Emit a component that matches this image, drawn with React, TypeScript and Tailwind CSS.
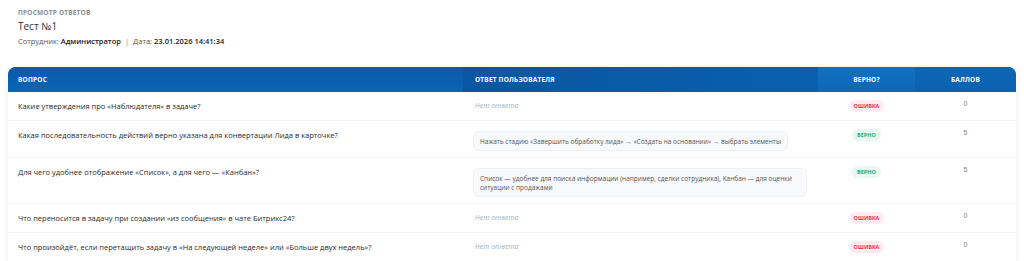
import React from "react";

type Row = {
  q: string;
  a: string | null;
  ok: boolean;
  score: number;
};

const rows: Row[] = [
  { q: "Какие утверждения про «Наблюдателя» в задаче?", a: null, ok: false, score: 0 },
  {
    q: "Какая последовательность действий верно указана для конвертации Лида в карточке?",
    a: "Нажать стадию «Завершить обработку лида» → «Создать на основании» → выбрать элементы",
    ok: true,
    score: 5,
  },
  {
    q: "Для чего удобнее отображение «Список», а для чего — «Канбан»?",
    a: "Список — удобнее для поиска информации (например, сделки сотрудника), Канбан — для оценки ситуации с продажами",
    ok: true,
    score: 5,
  },
  { q: "Что переносится в задачу при создании «из сообщения» в чате Битрикс24?", a: null, ok: false, score: 0 },
  { q: "Что произойдёт, если перетащить задачу в «На следующей неделе» или «Больше двух недель»?", a: null, ok: false, score: 0 },
];

export default function App() {
  return (
    <div
      className="w-[1024px] h-[261px] overflow-hidden bg-white text-[#333]"
      style={{ fontFamily: '"Open Sans", "Noto Sans", sans-serif' }}
    >
      <div className="px-[18px] pt-[8px]">
        <div className="text-[6.5px] font-bold uppercase tracking-[0.2px] text-[#8a8f96] leading-[10px]">
          Просмотр ответов
        </div>
        <div className="text-[10px] text-[#333] leading-[15px] mt-[1px]">Тест №1</div>
        <div className="text-[7.5px] text-[#555] leading-[12px] mt-[1px]">
          Сотрудник: <span className="font-semibold text-[#222]">Администратор</span>
          <span className="mx-[4px] text-[#888]">|</span>
          Дата: <span className="font-semibold text-[#222]">23.01.2026 14:41:34</span>
        </div>
      </div>

      <div className="mx-[8px] mt-[20px] rounded-t-[8px] bg-white shadow-[0_1px_6px_rgba(0,0,0,0.08)] overflow-hidden">
        <div className="grid grid-cols-[455px_355px_97px_1fr] h-[25px] bg-gradient-to-r from-[#0a5aa6] via-[#0b62b0] to-[#0d6fc2] text-white text-[6.5px] font-bold uppercase tracking-[0.2px]">
          <div className="flex items-center pl-[10px] bg-gradient-to-b from-[#0a5ba8] to-[#0b64b4]">Вопрос</div>
          <div className="flex items-center pl-[12px] bg-gradient-to-r from-[#0957a2] to-[#0a5fad]">Ответ пользователя</div>
          <div className="flex items-center justify-center bg-gradient-to-b from-[#1270c2] to-[#0f67b6]">Верно?</div>
          <div className="flex items-center justify-center bg-gradient-to-b from-[#0d66b6] to-[#0c62b0]">Баллов</div>
        </div>
        {rows.map((r, i) => (
          <div
            key={i}
            className="grid grid-cols-[455px_355px_97px_1fr] border-b border-[#f3f4f6] last:border-b-0"
          >
            <div className="pl-[10px] pr-[10px] pt-[9px] pb-[9px] text-[7.5px] leading-[10px] text-[#2b2b2b] font-medium">
              {r.q}
            </div>
            {r.a ? (
              <div className="pl-[10px] pr-[10px] pt-[10px] pb-[6px]">
                <div className="w-fit max-w-[334px] rounded-[5px] border border-[#eef0f3] bg-[#f8f9fa] px-[6px] py-[4.5px] text-[6.5px] leading-[9px] text-[#555]">
                  {r.a}
                </div>
              </div>
            ) : (
              <div className="pl-[12px] pr-[10px] pt-[9px] pb-[9px] text-[7px] leading-[10px] italic text-[#a8acb2]">
                Нет ответа
              </div>
            )}
            <div className="flex justify-center pt-[8px]">
              <span
                className={
                  r.ok
                    ? "h-[12px] px-[5px] rounded-full bg-[#e6f8ef] text-[#2ea874] text-[5.5px] font-bold uppercase leading-[12px]"
                    : "h-[12px] px-[5px] rounded-full bg-[#fdebf0] text-[#e0325f] text-[5.5px] font-bold uppercase leading-[12px]"
                }
              >
                {r.ok ? "Верно" : "Ошибка"}
              </span>
            </div>
            <div className="flex justify-center pt-[7px]">
              <span className="text-[7px] leading-[10px] text-[#808080]" style={{ fontFamily: '"Liberation Sans", sans-serif' }}>
                {r.score}
              </span>
            </div>
          </div>
        ))}
      </div>
    </div>
  );
}
